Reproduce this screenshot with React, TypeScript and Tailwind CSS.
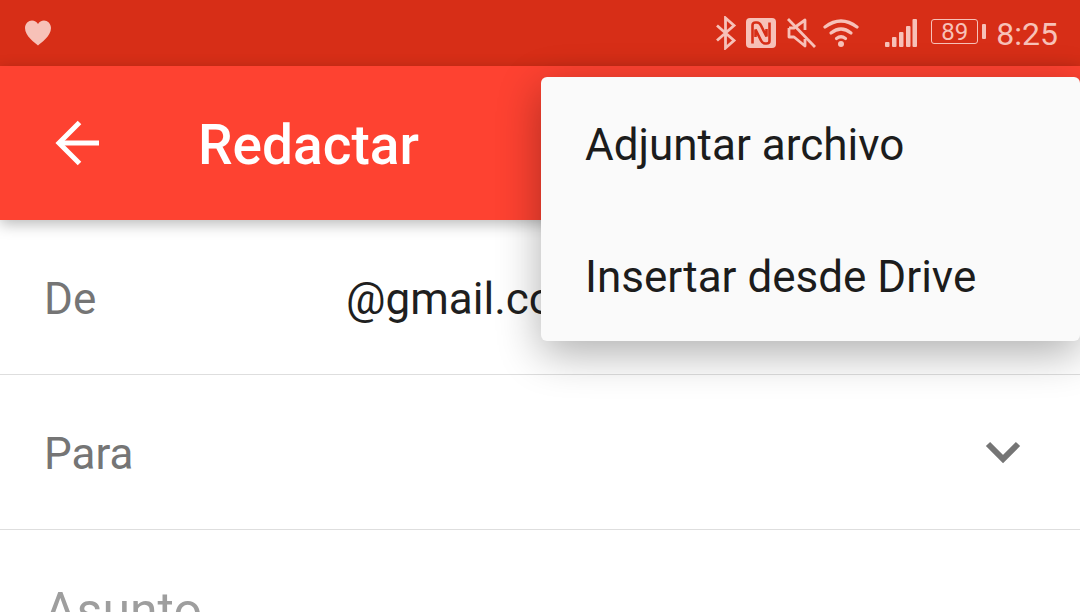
import React from "react";

const tint = "#f7c1b8";

function StatusIcons() {
  return (
    <div className="flex items-center text-[#f7c1b8]">
      <svg width="22" height="34" viewBox="0 0 22 34" fill="none" stroke={tint} strokeWidth="2.8">
        <path d="M2 9.5 L19 24.5 L10.5 32 V2 L19 9.5 L2 24.5" strokeLinejoin="miter" />
      </svg>
      <svg width="30" height="30" viewBox="0 0 30 30" className="ml-[9px]">
        <rect x="0" y="0" width="30" height="30" rx="4" fill={tint} />
        <path d="M6.5 25.5 V7 Q6.5 4.5 9.5 4.5 H11 Q13.5 4.5 15 7.5 L20.5 18.5 V11" fill="none" stroke="#d72e17" strokeWidth="2.6" />
        <path d="M23.5 4.5 V23 Q23.5 25.5 20.5 25.5 H19 Q16.5 25.5 15 22.5 L9.5 11.5 V19" fill="none" stroke="#d72e17" strokeWidth="2.6" />
      </svg>
      <svg width="30" height="32" viewBox="0 0 30 32" fill="none" stroke={tint} strokeWidth="2.8" className="ml-[10px]">
        <path d="M2 2 L29 30" />
        <path d="M3 11 H8 L19 3 V13 M19 22 V29 L8 20 H3 V11" strokeLinejoin="round" />
      </svg>
      <svg width="36" height="30" viewBox="0 0 36 30" fill="none" stroke={tint} strokeWidth="3.2" strokeLinecap="round" className="ml-[7px]">
        <path d="M2 9 Q18 -3 34 9" />
        <path d="M8 15 Q18 7 28 15" />
        <path d="M13.5 20.5 Q18 17 22.5 20.5" />
        <circle cx="18" cy="26" r="3" fill={tint} stroke="none" />
      </svg>
      <svg width="32" height="30" viewBox="0 0 32 30" fill={tint} className="ml-[26px]">
        <rect x="0" y="24" width="4.5" height="5" rx="1" />
        <rect x="7" y="19" width="4.5" height="10" rx="1" />
        <rect x="14" y="14" width="4.5" height="15" rx="1" />
        <rect x="21" y="8" width="4.5" height="21" rx="1" />
        <rect x="27.5" y="1" width="4.5" height="28" rx="1" />
      </svg>
      <div className="ml-[14px] flex items-center pb-[3px]">
        <div className="flex h-[25px] w-[47px] items-center justify-center rounded-[3px] border-[1.5px] border-[#f7c1b8] text-[24px] leading-none">
          89
        </div>
        <div className="ml-[4px] h-[15px] w-[4px] rounded-[1px] bg-[#f7c1b8]" />
      </div>
      <span className="ml-[10px] pt-[2px] text-[32px] leading-none">8:25</span>
    </div>
  );
}

function Row({ label, children, h }: { label: string; children?: React.ReactNode; h: string }) {
  return (
    <div className={`flex items-center border-b border-[#dedede] pl-[44px] ${h}`}>
      <span className="w-[302px] pt-[4px] text-[44px] leading-none text-[#757575]">{label}</span>
      {children}
    </div>
  );
}

export default function App() {
  return (
    <div className="relative h-[612px] w-[1080px] overflow-hidden bg-white [font-family:Roboto,sans-serif]">
      <div className="flex h-[66px] items-center justify-between bg-[#d72e17] pl-[24px] pr-[22px]">
        <svg width="28" height="26" viewBox="0 0 28 26" fill={tint}>
          <path d="M14 25.5 C11 23 1 16 1 8 C1 3.5 4.5 0.5 8 0.5 C10.5 0.5 12.8 1.8 14 4 C15.2 1.8 17.5 0.5 20 0.5 C23.5 0.5 27 3.5 27 8 C27 16 17 23 14 25.5 Z" />
        </svg>
        <StatusIcons />
      </div>

      <div className="relative z-10 flex h-[154px] items-center bg-[#fe4231] pl-[55px] shadow-[0_4px_14px_rgba(0,0,0,0.28)]">
        <svg width="46" height="46" viewBox="0 0 46 46" fill="none" stroke="#ffffff" strokeWidth="5">
          <path d="M44 23 H4" />
          <path d="M24.5 2.5 L4 23 L24.5 43.5" />
        </svg>
        <span className="ml-[97px] pt-[4px] text-[55px] font-medium leading-none text-white">Redactar</span>
      </div>

      <Row label="De" h="h-[155px]">
        <span className="pt-[4px] text-[44px] leading-none text-[#1f1f1f]">@gmail.com</span>
      </Row>
      <Row label="Para" h="h-[155px]">
        <svg width="36" height="24" viewBox="0 0 36 24" fill="none" stroke="#757575" strokeWidth="6" className="ml-auto mr-[59px]">
          <path d="M3 4 L18 19 L33 4" />
        </svg>
      </Row>
      <div className="pl-[44px] pt-[56px]">
        <span className="text-[50px] leading-none text-[#9e9e9e]">Asunto</span>
      </div>

      <div className="absolute left-[541px] top-[77px] z-20 flex h-[264px] w-[539px] flex-col rounded-[6px] bg-[#fafafa] pl-[44px] text-[44px] leading-none text-[#1c1c1c] shadow-[0_12px_44px_rgba(0,0,0,0.32)]">
        <div className="flex h-[132px] items-center pt-[4px]">Adjuntar archivo</div>
        <div className="flex h-[132px] items-center pt-[4px]">Insertar desde Drive</div>
      </div>
    </div>
  );
}
